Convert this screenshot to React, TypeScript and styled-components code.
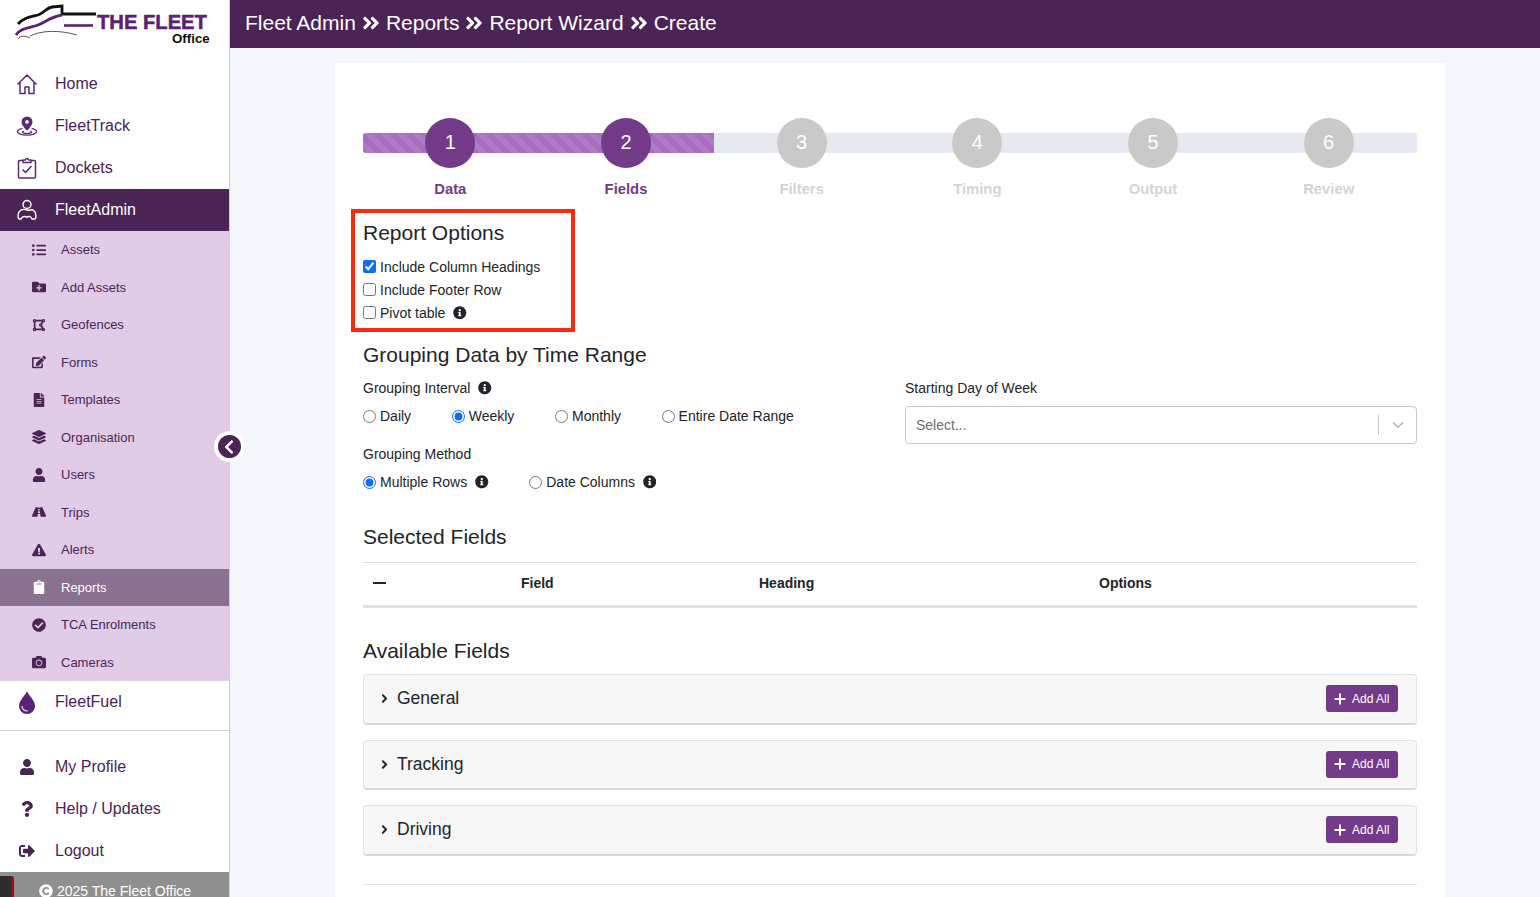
import React from 'react'
import styled, { createGlobalStyle } from 'styled-components'
import { ChevronDown, ChevronRight, Plus } from 'lucide-react'
import {
  FaAngleDoubleRight,
  FaCamera,
  FaCheckCircle,
  FaChevronLeft,
  FaClipboard,
  FaCopyright,
  FaDrawPolygon,
  FaEdit,
  FaExclamationTriangle,
  FaFileAlt,
  FaFolderPlus,
  FaInfoCircle,
  FaLayerGroup,
  FaListUl,
  FaQuestion,
  FaRoad,
  FaSignOutAlt,
  FaUser,
} from 'react-icons/fa'

const DARK = '#4a2454'
const PURPLE = '#733a8a'

const GlobalStyle = createGlobalStyle`
  html, body {
    margin: 0;
    height: 897px;
    overflow: hidden;
    background: #f3f7fb;
    font-family: "Liberation Sans", Arial, sans-serif;
    color: #212529;
  }
  * {
    box-sizing: border-box;
  }
`

const Layout = styled.div`
  display: flex;
  height: 897px;
  overflow: hidden;
`

/* ---------- sidebar ---------- */

const Sidebar = styled.aside`
  position: relative;
  flex: 0 0 230px;
  min-height: 920px;
  background: #fff;
  border-right: 1px solid #ced2d8;
  display: flex;
  flex-direction: column;
`
const LogoWrap = styled.div`
  flex: 0 0 63px;
  padding-left: 14px;
  padding-top: 3px;
`
const NavItem = styled.div<{ $active?: boolean }>`
  flex: 0 0 42px;
  padding-left: 16px;
  display: flex;
  align-items: center;
  gap: 17px;
  font-size: 16px;
  color: ${p => (p.$active ? '#fff' : DARK)};
  background: ${p => (p.$active ? DARK : 'transparent')};
`
const NavIcon = styled.span`
  flex: 0 0 22px;
  display: flex;
  justify-content: center;
  align-items: center;
  color: #5b2a72;
`
const ActiveIcon = styled(NavIcon)`
  color: #fff;
`
const SubList = styled.div`
  flex: 0 0 auto;
  background: #e1cce8;
`
const SubItem = styled.div<{ $active?: boolean }>`
  height: 37.5px;
  padding-left: 32px;
  display: flex;
  align-items: center;
  gap: 15px;
  font-size: 13px;
  color: ${p => (p.$active ? '#fff' : DARK)};
  background: ${p => (p.$active ? '#8a7190' : 'transparent')};
`
const SubIcon = styled.span`
  flex: 0 0 14px;
  display: flex;
  justify-content: center;
  align-items: center;
  font-size: 14px;
`
const NavDivider = styled.hr`
  flex: 0 0 auto;
  width: 100%;
  margin: 7px 0 15px;
  border: 0;
  border-top: 1px solid #cfcfd3;
`
const SidebarFooter = styled.div`
  flex: 1;
  background: #8f8f8f;
  display: flex;
  gap: 25px;
  padding-top: 4px;
`
const BuildTag = styled.span`
  flex: 0 0 14px;
  height: 30px;
  background: #2e2b2b;
  border-right: 3px solid #a30c0c;
  border-top-right-radius: 3px;
`
const Copyright = styled.span`
  display: flex;
  align-items: center;
  gap: 4px;
  height: 22px;
  margin-top: 4px;
  color: #fff;
  font-size: 14px;
  white-space: nowrap;
`
const CollapseButton = styled.button`
  position: absolute;
  top: 431px;
  left: 214px;
  width: 31px;
  height: 31px;
  border-radius: 50%;
  border: 4px solid #fff;
  background: ${DARK};
  color: #fff;
  padding: 0 2px 0 0;
  display: flex;
  align-items: center;
  justify-content: center;
  font-size: 16px;
`

/* ---------- header ---------- */

const Main = styled.main`
  flex: 1;
  min-width: 0;
  display: flex;
  flex-direction: column;
`
const TopBar = styled.header`
  flex: 0 0 48px;
  background: ${DARK};
  color: #fff;
  display: flex;
  align-items: center;
  gap: 5px;
  padding: 0 0 2px 15px;
  font-size: 21px;
  svg {
    font-size: 20px;
  }
`
const Content = styled.div`
  flex: 1;
  padding: 15px 95px 0 105px;
`
const Card = styled.section`
  background: #fff;
  height: 900px;
  padding: 55px 28px 0;
`

/* ---------- stepper ---------- */

const Stepper = styled.div`
  position: relative;
  display: grid;
  grid-template-columns: repeat(6, 1fr);
  height: 91px;
`
const Track = styled.div`
  position: absolute;
  left: 0;
  right: 0;
  top: 15px;
  height: 20px;
  background: #e6e9ef;
  border-radius: 3px;
  overflow: hidden;
`
const TrackFill = styled.div`
  height: 100%;
  background-color: #a66cbf;
  background-image: linear-gradient(
    45deg,
    rgba(255, 255, 255, 0.1) 25%,
    transparent 25%,
    transparent 50%,
    rgba(255, 255, 255, 0.1) 50%,
    rgba(255, 255, 255, 0.1) 75%,
    transparent 75%,
    transparent
  );
  background-size: 16px 16px;
`
const Step = styled.div`
  position: relative;
  display: flex;
  flex-direction: column;
  align-items: center;
  padding-right: 1px;
`
const StepCircle = styled.div<{ $done?: boolean }>`
  width: 50px;
  height: 50px;
  border-radius: 50%;
  background: ${p => (p.$done ? PURPLE : '#c9c9c9')};
  color: #fff;
  font-size: 20px;
  padding-bottom: 2px;
  display: flex;
  align-items: center;
  justify-content: center;
`
const StepLabel = styled.div<{ $done?: boolean }>`
  margin-top: 13px;
  font-size: 14.8px;
  font-weight: 700;
  color: ${p => (p.$done ? PURPLE : '#d4d4d4')};
`

/* ---------- form ---------- */

const OptionsBox = styled.div`
  width: 224px;
  height: 123px;
  margin-left: -12px;
  border: 4px solid #fb2a0d;
  padding: 0 0 0 8px;
`
const SectionTitle = styled.h2<{ $top?: number; $bottom?: number }>`
  margin: ${p => p.$top ?? 0}px 0 ${p => p.$bottom ?? 0}px;
  font-size: 21px;
  line-height: 26px;
  font-weight: 400;
  color: #212529;
`
const CheckRow = styled.label`
  height: 23px;
  display: flex;
  align-items: center;
  gap: 4px;
  font-size: 14px;
  color: #212529;
  white-space: nowrap;
`
const Check = styled.input`
  width: 13px;
  height: 13px;
  margin: 0;
  accent-color: #0b6cff;
`
const Info = styled(FaInfoCircle)`
  margin-left: 4px;
  font-size: 13.5px;
  color: #212529;
`
const GroupGrid = styled.div`
  display: grid;
  grid-template-columns: 542px 1fr;
`
const FieldLabel = styled.div<{ $top?: number }>`
  margin-top: ${p => p.$top ?? 0}px;
  height: 20px;
  display: flex;
  align-items: center;
  gap: 4px;
  font-size: 14px;
  color: #212529;
`
const RadioLine = styled.div`
  margin-top: 8px;
  height: 20px;
  display: flex;
  gap: 40.6px;
`
const RadioOption = styled.label`
  display: flex;
  align-items: center;
  gap: 4px;
  font-size: 14px;
  white-space: nowrap;
`
const SelectBox = styled.div`
  margin-top: 8px;
  height: 38px;
  border: 1px solid #c7c9cc;
  border-radius: 4px;
  display: flex;
  align-items: center;
  justify-content: space-between;
  padding: 0 9px 0 10px;
  font-size: 14px;
  color: #6c6f73;
`
const SelectCaret = styled.span`
  display: flex;
  align-items: center;
  height: 20px;
  padding-left: 10px;
  border-left: 1px solid #ccc;
  color: #b3b3b3;
`
const TableHead = styled.div`
  height: 46px;
  padding-bottom: 2px;
  border-top: 1px solid #dee2e6;
  border-bottom: 3px solid #dee2e6;
  display: grid;
  grid-template-columns: 158px 238px 340px 1fr;
  align-items: center;
  font-size: 14px;
  font-weight: 700;
  color: #212529;
`
const CollapseDash = styled.span`
  display: block;
  width: 13px;
  height: 2.5px;
  margin-left: 10px;
  background: #212529;
`
const AccordionList = styled.div`
  display: flex;
  flex-direction: column;
  gap: 15px;
`
const Accordion = styled.div`
  height: 50.5px;
  background: #f7f7f7;
  border: 1px solid #e2e2e2;
  border-bottom: 2px solid #d9d9d9;
  border-radius: 4px;
  display: flex;
  align-items: center;
  justify-content: space-between;
  padding: 0 18px 0 14px;
`
const AccordionTitle = styled.div`
  display: flex;
  align-items: center;
  gap: 6px;
  font-size: 17.5px;
  color: #212529;
`
const AddAllButton = styled.button`
  width: 72px;
  height: 27px;
  border: 0;
  border-radius: 3px;
  background: ${PURPLE};
  color: #fff;
  font: 12px "Liberation Sans", Arial, sans-serif;
  display: flex;
  align-items: center;
  gap: 4px;
  padding: 0 0 0 6px;
  white-space: nowrap;
`
const EndRule = styled.hr`
  margin: 28px 0 0;
  border: 0;
  border-top: 1px solid #e3e3e3;
`

const Logo = () => (
  <svg width="200" height="44" viewBox="14 3 200 44" role="img" aria-label="The Fleet Office">
    <path d="M18 24c5-6 12-7 20-9 6-2 8-7 14-8l10-1v8h34" fill="none" stroke="#111" strokeWidth="2.800" />
    <path d="M16 35c4-7 14-7 22-10 8-3 12-8 24-10" fill="none" stroke="#5b2176" strokeWidth="2.800" />
    <path d="M64 25.500h29" fill="none" stroke="#5b2176" strokeWidth="2.600" />
    <path d="M18 39c2-4 8-3 12-1M30 36c12-6 30-6 47-1" fill="none" stroke="#555" strokeWidth="1" />
    <text x="97" y="29" fontFamily="Liberation Sans" fontWeight="700" fontSize="20.200" fill="#5b2176" stroke="#5b2176" strokeWidth=".5">
      THE FLEET
    </text>
    <text x="172" y="43" fontFamily="Liberation Sans" fontWeight="700" fontSize="13.300" fill="#111">
      Office
    </text>
  </svg>
)

const HomeIcon = () => (
  <svg width="22" height="22" viewBox="0 0 22 22" fill="none" stroke="currentColor" strokeWidth="1.500" strokeLinejoin="round">
    <path d="M1.500 11.500 11 2l9.500 9.500M4 9.500V20.500h5V14h4v6.500h5V9.500" />
  </svg>
)

const PinIcon = () => (
  <svg width="22" height="22" viewBox="0 0 24 24" fill="none" stroke="currentColor" strokeWidth="1.400">
    <path
      d="M12 1.500a6 6 0 0 0-6 6c0 4 6 9.500 6 9.500s6-5.500 6-9.500a6 6 0 0 0-6-6zm0 4a2 2 0 1 1 0 4 2 2 0 0 1 0-4z"
      fill="currentColor"
      stroke="none"
      fillRule="evenodd"
    />
    <path d="M7 14.500c-3 .8-5.500 2-5.500 3.500 0 2.200 4.700 4 10.500 4s10.500-1.800 10.500-4c0-1.500-2.500-2.700-5.500-3.500" />
    <path d="M8.500 17.500c-1 .3-1.500.7-1.500 1 0 .8 2.200 1.500 5 1.500s5-.7 5-1.500c0-.3-.5-.7-1.500-1" />
  </svg>
)

const DocketIcon = () => (
  <svg width="20" height="22" viewBox="0 0 20 22" fill="none" stroke="currentColor" strokeWidth="1.500" strokeLinejoin="round">
    <path d="M6 3.500H2.500a1 1 0 0 0-1 1V20a1 1 0 0 0 1 1h15a1 1 0 0 0 1-1V4.500a1 1 0 0 0-1-1H14" />
    <path d="M6 5.500V3h2.500a1.500 1.500 0 0 1 3 0H14v2.500z" />
    <path d="m5.500 12.500 3 3 6-6.500" />
  </svg>
)

const AdminIcon = () => (
  <svg width="22" height="22" viewBox="0 0 22 22" fill="none" stroke="currentColor" strokeWidth="1.400">
    <circle cx="11" cy="5.500" r="4" />
    <path d="M3 20c-1.500-1-1.500-7 2-9 2-1 3-1 6 0s4-1 6 0c3.500 2 3.500 8 2 9h-3c-1-2-2-3-3-2.500-1 .5-3 .5-4 0S6 18 5 20z" />
  </svg>
)

const DropIcon = () => (
  <svg width="18" height="24" viewBox="0 0 18 24">
    <path d="M9 1c1 4 8 9 8 15a8 8 0 0 1-16 0C1 10 8 5 9 1z" fill="#5b2176" />
    <path d="M4 16c0 3.500 3 5 6 5" fill="none" stroke="#e9dcef" strokeWidth="1.200" />
  </svg>
)

const adminItems = [
  { label: 'Assets', icon: <FaListUl /> },
  { label: 'Add Assets', icon: <FaFolderPlus /> },
  { label: 'Geofences', icon: <FaDrawPolygon /> },
  { label: 'Forms', icon: <FaEdit /> },
  { label: 'Templates', icon: <FaFileAlt /> },
  { label: 'Organisation', icon: <FaLayerGroup /> },
  { label: 'Users', icon: <FaUser /> },
  { label: 'Trips', icon: <FaRoad /> },
  { label: 'Alerts', icon: <FaExclamationTriangle /> },
  { label: 'Reports', icon: <FaClipboard />, active: true },
  { label: 'TCA Enrolments', icon: <FaCheckCircle /> },
  { label: 'Cameras', icon: <FaCamera /> },
]

const steps = ['Data', 'Fields', 'Filters', 'Timing', 'Output', 'Review']

const App: React.FC = () => (
  <Layout>
    <GlobalStyle />
    <Sidebar>
      <LogoWrap>
        <Logo />
      </LogoWrap>
      <NavItem>
        <NavIcon>
          <HomeIcon />
        </NavIcon>
        Home
      </NavItem>
      <NavItem>
        <NavIcon>
          <PinIcon />
        </NavIcon>
        FleetTrack
      </NavItem>
      <NavItem>
        <NavIcon>
          <DocketIcon />
        </NavIcon>
        Dockets
      </NavItem>
      <NavItem $active>
        <ActiveIcon>
          <AdminIcon />
        </ActiveIcon>
        FleetAdmin
      </NavItem>
      <SubList>
        {adminItems.map(item => (
          <SubItem key={item.label} $active={item.active}>
            <SubIcon>{item.icon}</SubIcon>
            {item.label}
          </SubItem>
        ))}
      </SubList>
      <NavItem>
        <NavIcon>
          <DropIcon />
        </NavIcon>
        FleetFuel
      </NavItem>
      <NavDivider />
      <NavItem>
        <NavIcon>
          <FaUser size={16} color={DARK} />
        </NavIcon>
        My Profile
      </NavItem>
      <NavItem>
        <NavIcon>
          <FaQuestion size={16} color={DARK} />
        </NavIcon>
        Help / Updates
      </NavItem>
      <NavItem>
        <NavIcon>
          <FaSignOutAlt size={16} color={DARK} />
        </NavIcon>
        Logout
      </NavItem>
      <SidebarFooter>
        <BuildTag />
        <Copyright>
          <FaCopyright size={14} />
          2025 The Fleet Office
        </Copyright>
      </SidebarFooter>
      <CollapseButton aria-label="Collapse sidebar">
        <FaChevronLeft />
      </CollapseButton>
    </Sidebar>

    <Main>
      <TopBar>
        Fleet Admin <FaAngleDoubleRight /> Reports <FaAngleDoubleRight /> Report Wizard <FaAngleDoubleRight /> Create
      </TopBar>
      <Content>
        <Card>
          <Stepper>
            <Track>
              <TrackFill style={{ width: `${(2 / 6) * 100}%` }} />
            </Track>
            {steps.map((label, i) => (
              <Step key={label}>
                <StepCircle $done={i < 2}>{i + 1}</StepCircle>
                <StepLabel $done={i < 2}>{label}</StepLabel>
              </Step>
            ))}
          </Stepper>

          <OptionsBox>
            <SectionTitle $top={7} $bottom={9}>
              Report Options
            </SectionTitle>
            <CheckRow>
              <Check type="checkbox" defaultChecked />
              Include Column Headings
            </CheckRow>
            <CheckRow>
              <Check type="checkbox" />
              Include Footer Row
            </CheckRow>
            <CheckRow>
              <Check type="checkbox" />
              Pivot table <Info />
            </CheckRow>
          </OptionsBox>

          <SectionTitle $top={10} $bottom={10}>
            Grouping Data by Time Range
          </SectionTitle>
          <GroupGrid>
            <div>
              <FieldLabel>
                Grouping Interval <Info />
              </FieldLabel>
              <RadioLine>
                <RadioOption>
                  <Check type="radio" name="interval" />
                  Daily
                </RadioOption>
                <RadioOption>
                  <Check type="radio" name="interval" defaultChecked />
                  Weekly
                </RadioOption>
                <RadioOption>
                  <Check type="radio" name="interval" />
                  Monthly
                </RadioOption>
                <RadioOption>
                  <Check type="radio" name="interval" />
                  Entire Date Range
                </RadioOption>
              </RadioLine>
              <FieldLabel $top={18}>Grouping Method</FieldLabel>
              <RadioLine>
                <RadioOption>
                  <Check type="radio" name="method" defaultChecked />
                  Multiple Rows <Info />
                </RadioOption>
                <RadioOption>
                  <Check type="radio" name="method" />
                  Date Columns <Info />
                </RadioOption>
              </RadioLine>
            </div>
            <div>
              <FieldLabel>Starting Day of Week</FieldLabel>
              <SelectBox>
                Select...
                <SelectCaret>
                  <ChevronDown size={18} />
                </SelectCaret>
              </SelectBox>
            </div>
          </GroupGrid>

          <SectionTitle $top={32} $bottom={12}>
            Selected Fields
          </SectionTitle>
          <TableHead>
            <CollapseDash />
            <span>Field</span>
            <span>Heading</span>
            <span>Options</span>
          </TableHead>

          <SectionTitle $top={30} $bottom={10}>
            Available Fields
          </SectionTitle>
          <AccordionList>
            {['General', 'Tracking', 'Driving'].map(title => (
              <Accordion key={title}>
                <AccordionTitle>
                  <ChevronRight size={13} strokeWidth={3.5} />
                  {title}
                </AccordionTitle>
                <AddAllButton>
                  <Plus size={16} strokeWidth={3} />
                  Add All
                </AddAllButton>
              </Accordion>
            ))}
          </AccordionList>
          <EndRule />
        </Card>
      </Content>
    </Main>
  </Layout>
)

export default App
